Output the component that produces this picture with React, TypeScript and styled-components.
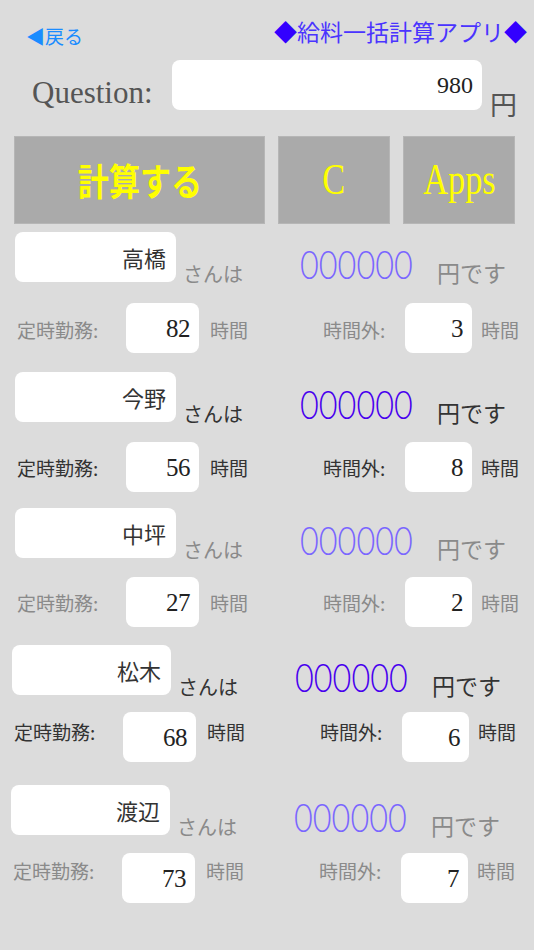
import React from 'react';
import styled, { createGlobalStyle } from 'styled-components';

const JP = `"Noto Sans CJK JP", "Noto Sans", sans-serif`;
const SERIF = `"Liberation Serif", "Noto Sans CJK JP", serif`;

const GlobalStyle = createGlobalStyle`
  html, body { margin: 0; padding: 0; background: #dcdcdc; }
  body { width: 534px; height: 950px; overflow: hidden; font-family: ${JP}; }
  * { box-sizing: border-box; }
`;

const Page = styled.div`
  width: 534px;
  height: 950px;
  background: #dcdcdc;
  display: flex;
  flex-direction: column;
`;

const Header = styled.header`
  height: 60px;
  display: flex;
  justify-content: space-between;
  align-items: flex-start;
  padding: 20px 7px 0 26px;
`;

const Back = styled.a`
  font-family: ${JP};
  font-size: 19px;
  line-height: 1;
  color: #1a8cff;
  margin-top: 6px;
  text-decoration: none;
`;

const Title = styled.h1`
  margin: 0;
  font-family: ${JP};
  font-weight: 400;
  font-size: 23px;
  line-height: 1;
  color: #4a34ff;
`;

const Diamond = styled.span`
  color: #3300ff;
`;

const QuestionRow = styled.div`
  height: 50px;
  display: flex;
  align-items: flex-start;
  padding-left: 32px;
`;

const QLabel = styled.div`
  width: 140px;
  margin-top: 17px;
  font-family: ${SERIF};
  font-size: 31px;
  line-height: 1;
  color: #555;
`;

const Field = styled.div<{ $w: number }>`
  width: ${(p) => p.$w}px;
  height: 50px;
  background: #fff;
  border-radius: 8px;
  display: flex;
  align-items: center;
  justify-content: flex-end;
`;

const QValue = styled.span`
  padding-right: 9px;
  font-family: ${SERIF};
  font-size: 24px;
  line-height: 1;
  color: #222;
`;

const QYen = styled.span`
  margin-left: 8px;
  margin-top: 30px;
  font-family: ${JP};
  font-size: 27px;
  line-height: 1;
  color: #555;
`;

const ButtonRow = styled.div`
  margin-top: 26px;
  height: 88px;
  display: flex;
  gap: 13px;
  padding-left: 14px;
`;

const Button = styled.button<{ $w: number }>`
  width: ${(p) => p.$w}px;
  height: 88px;
  padding: 0;
  background: #aaaaaa;
  border: 1px solid #b6b6b6;
  display: flex;
  align-items: center;
  justify-content: center;
  color: #ffff00;
  overflow: hidden;
`;

const JPButtonText = styled.span`
  display: inline-block;
  font-family: ${JP};
  font-weight: 700;
  font-size: 37px;
  line-height: 1;
  transform: scaleX(0.84);
`;

const LatinButtonText = styled.span`
  display: inline-block;
  font-family: ${SERIF};
  font-size: 44px;
  line-height: 1;
  transform: scaleX(0.78);
`;

const People = styled.div`
  display: flex;
  flex-direction: column;
`;

const Person = styled.section<{ $top: number; $shift: number }>`
  margin-top: ${(p) => p.$top}px;
  padding-left: ${(p) => 15 + p.$shift}px;
  display: flex;
  flex-direction: column;
`;

const NameRow = styled.div`
  height: 50px;
  display: flex;
  align-items: flex-start;
`;

const NameText = styled.span`
  padding-right: 10px;
  font-family: ${JP};
  font-size: 22px;
  line-height: 1;
  color: #333;
`;

const Suffix = styled.span<{ $tone: string }>`
  width: 124px;
  padding-left: 7px;
  margin-top: 32px;
  font-family: ${JP};
  font-size: 20px;
  line-height: 1;
  color: ${(p) => p.$tone};
`;

const AmountCell = styled.div`
  width: 137px;
  margin-top: 12px;
`;

const Amount = styled.span<{ $color: string }>`
  display: inline-block;
  font-family: Lato, Roboto, "Liberation Sans", sans-serif;
  font-weight: 300;
  font-size: 40px;
  line-height: 1;
  color: ${(p) => p.$color};
  transform: scaleX(0.81);
  transform-origin: left center;
`;

const AmountUnit = styled.span<{ $tone: string }>`
  margin-top: 29px;
  font-family: ${JP};
  font-size: 23px;
  line-height: 1;
  color: ${(p) => p.$tone};
`;

const HoursRow = styled.div<{ $gap: number }>`
  margin-top: ${(p) => p.$gap}px;
  height: 50px;
  display: flex;
  align-items: flex-start;
`;

const HoursText = styled.span<{ $w?: number; $pad?: number; $top: number; $tone: string }>`
  ${(p) => (p.$w ? `width: ${p.$w}px;` : '')}
  padding-left: ${(p) => p.$pad ?? 0}px;
  margin-top: ${(p) => p.$top}px;
  font-family: ${JP};
  font-size: 19px;
  line-height: 1;
  color: ${(p) => p.$tone};
  white-space: nowrap;
`;

const HoursValue = styled.span`
  padding-right: 9px;
  font-family: ${SERIF};
  font-size: 25px;
  line-height: 1;
  color: #222;
  letter-spacing: -0.5px;
`;

type PersonData = {
  name: string;
  regular: number;
  overtime: number;
  dark: boolean;
  top: number;
  gap: number;
  shift: number;
  labelTop: number;
  nameWidth: number;
};

const people: PersonData[] = [
  { name: '高橋', regular: 82, overtime: 3, dark: false, top: 8, gap: 21, shift: 0, labelTop: 17, nameWidth: 161 },
  { name: '今野', regular: 56, overtime: 8, dark: true, top: 19, gap: 20, shift: 0, labelTop: 16, nameWidth: 161 },
  { name: '中坪', regular: 27, overtime: 2, dark: false, top: 16, gap: 19, shift: 0, labelTop: 16, nameWidth: 161 },
  { name: '松木', regular: 68, overtime: 6, dark: true, top: 18, gap: 17, shift: -3, labelTop: 10, nameWidth: 159 },
  { name: '渡辺', regular: 73, overtime: 7, dark: false, top: 23, gap: 18, shift: -4, labelTop: 8, nameWidth: 159 },
];

export default function App() {
  return (
    <Page>
      <GlobalStyle />
      <Header>
        <Back>◀戻る</Back>
        <Title>
          <Diamond>◆</Diamond>給料一括計算アプリ<Diamond>◆</Diamond>
        </Title>
      </Header>
      <QuestionRow>
        <QLabel>Question:</QLabel>
        <Field $w={310}>
          <QValue>980</QValue>
        </Field>
        <QYen>円</QYen>
      </QuestionRow>
      <ButtonRow>
        <Button $w={251}>
          <JPButtonText>計算する</JPButtonText>
        </Button>
        <Button $w={112}>
          <LatinButtonText>C</LatinButtonText>
        </Button>
        <Button $w={112}>
          <LatinButtonText>Apps</LatinButtonText>
        </Button>
      </ButtonRow>
      <People>
        {people.map((p) => {
          const tone = p.dark ? '#333333' : '#8a8a8a';
          const blue = p.dark ? '#4800ee' : '#7a66ff';
          return (
            <Person key={p.name} $top={p.top} $shift={p.shift}>
              <NameRow>
                <Field $w={p.nameWidth}>
                  <NameText>{p.name}</NameText>
                </Field>
                <Suffix $tone={tone}>さんは</Suffix>
                <AmountCell>
                  <Amount $color={blue}>000000</Amount>
                </AmountCell>
                <AmountUnit $tone={tone}>円です</AmountUnit>
              </NameRow>
              <HoursRow $gap={p.gap}>
                <HoursText $w={111} $pad={2} $top={p.labelTop} $tone={tone}>
                  定時勤務:
                </HoursText>
                <Field $w={73}>
                  <HoursValue>{p.regular}</HoursValue>
                </Field>
                <HoursText $w={124} $pad={11} $top={p.labelTop} $tone={tone}>
                  時間
                </HoursText>
                <HoursText $w={82} $top={p.labelTop} $tone={tone}>
                  時間外:
                </HoursText>
                <Field $w={67}>
                  <HoursValue>{p.overtime}</HoursValue>
                </Field>
                <HoursText $pad={9} $top={p.labelTop} $tone={tone}>
                  時間
                </HoursText>
              </HoursRow>
            </Person>
          );
        })}
      </People>
    </Page>
  );
}
